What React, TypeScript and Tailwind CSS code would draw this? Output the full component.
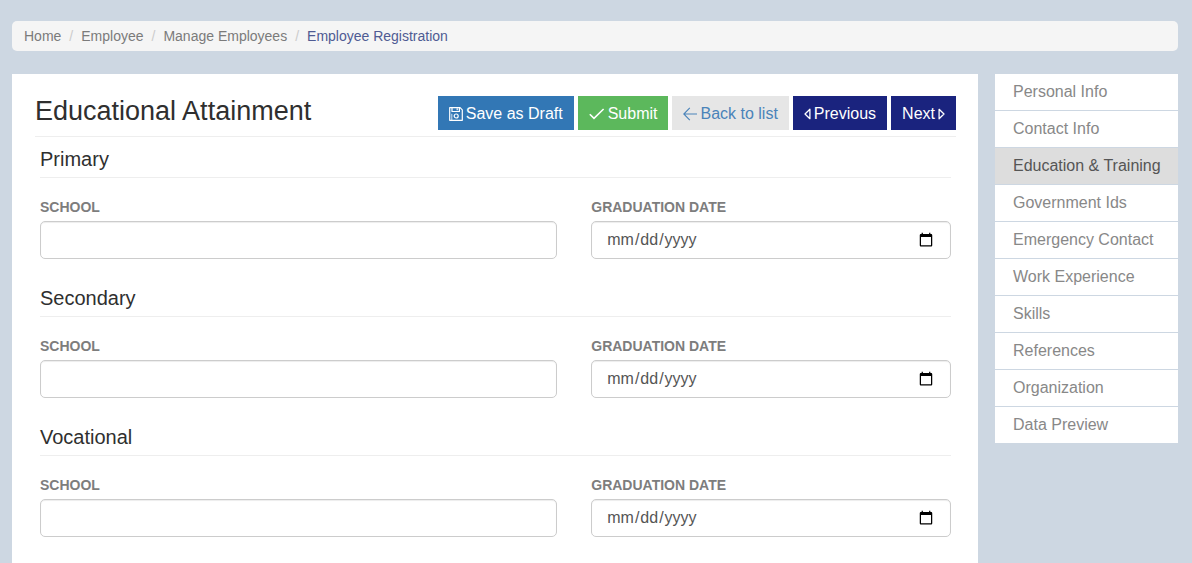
const crumbs = ["Home", "Employee", "Manage Employees", "Employee Registration"];

const steps = [
  "Personal Info",
  "Contact Info",
  "Education & Training",
  "Government Ids",
  "Emergency Contact",
  "Work Experience",
  "Skills",
  "References",
  "Organization",
  "Data Preview",
];

const activeStep = "Education & Training";

function SaveIcon() {
  return (
    <svg viewBox="0 0 14 14" className="size-[14px]" fill="none" stroke="currentColor" strokeWidth="1.2" strokeLinejoin="round" aria-hidden="true">
      <path d="M.7.7h10.4l2.2 2.2v10.4H.7z" />
      <path d="M3 .7v3.8h7.4V.7M8.2 1.2v2" />
      <path d="M2.8 13V6.8" strokeWidth=".8" />
      <circle cx="7.2" cy="9" r="2" />
    </svg>
  );
}

function CheckIcon() {
  return (
    <svg viewBox="0 0 16 14" className="h-[14px] w-4" fill="none" stroke="currentColor" strokeWidth="1.6" aria-hidden="true">
      <path d="M.8 7.2l4.2 4.2L14.6 2" />
    </svg>
  );
}

function ArrowLeftIcon() {
  return (
    <svg viewBox="0 0 14 14" className="size-[14px]" fill="none" stroke="currentColor" strokeWidth="1.1" aria-hidden="true">
      <path d="M14 7H.8M6.8.8L.8 7l6 6.2" />
    </svg>
  );
}

function Triangle({ flip = false }: { flip?: boolean }) {
  return (
    <svg
      viewBox="0 0 7 12"
      className={flip ? "h-3 w-[7px] rotate-180" : "h-3 w-[7px]"}
      fill="none"
      stroke="currentColor"
      strokeWidth="1.3"
      strokeLinejoin="round"
      aria-hidden="true"
    >
      <path d="M5.9 1.3v9.4L1 6z" />
    </svg>
  );
}

function Breadcrumb() {
  return (
    <nav aria-label="Breadcrumb" className="rounded-[5px] bg-[#f5f5f5] px-3 py-[5px]">
      <ol className="flex text-sm leading-5">
        {crumbs.map((crumb, i) => (
          <li key={crumb} className="flex">
            {i > 0 && <span className="px-2 text-[#cccccc]">/</span>}
            <a href="#" className={i === crumbs.length - 1 ? "text-[#4f5b93]" : "text-[#7b7b7b]"}>
              {crumb}
            </a>
          </li>
        ))}
      </ol>
    </nav>
  );
}

function EducationSection({ title }: { title: string }) {
  const id = title.toLowerCase();
  return (
    <section>
      <h2 className="border-b border-[#eeeeee] pb-1 text-xl leading-7 text-[#2f2f2f]">{title}</h2>
      <div className="mt-5 grid grid-cols-12 gap-x-[34px]">
        <div className="col-span-7">
          <label htmlFor={`${id}-school`} className="mb-[5px] block text-sm leading-[18px] font-bold text-[#7d7d7d]">
            SCHOOL
          </label>
          <input
            id={`${id}-school`}
            type="text"
            className="block h-[38px] w-full rounded-[5px] border border-[#cccccc] bg-white px-[14px] text-base text-[#555555] shadow-[inset_0_1px_1px_rgba(0,0,0,0.075)]"
          />
        </div>
        <div className="col-span-5">
          <label htmlFor={`${id}-date`} className="mb-[5px] block text-sm leading-[18px] font-bold text-[#7d7d7d]">
            GRADUATION DATE
          </label>
          <input
            id={`${id}-date`}
            type="date"
            className="block h-[38px] w-full rounded-[5px] border border-[#cccccc] bg-white px-[14px] text-base text-[#555555] shadow-[inset_0_1px_1px_rgba(0,0,0,0.075)]"
          />
        </div>
      </div>
    </section>
  );
}

export default function App() {
  return (
    <div className="flex min-h-screen flex-col bg-[#cdd7e2] pt-[21px] pr-[14px] pl-3 font-['Liberation_Sans',Arial,sans-serif]">
      <Breadcrumb />
      <div className="mt-[23px] flex flex-1 items-stretch gap-[17px]">
        <main className="min-w-0 flex-1 bg-white pt-[22px] pr-[22px] pb-6 pl-[23px]">
          <header className="flex items-start justify-between border-b border-[#eeeeee] pb-[6px]">
            <h1 className="text-[27px] leading-[30px] text-[#2f2f2f]">Educational Attainment</h1>
            <div className="flex gap-1 text-base">
              <button type="button" className="flex h-[34px] items-center gap-[3px] bg-[#3277b5] px-[11px] pt-px text-white">
                <SaveIcon />
                Save as Draft
              </button>
              <button type="button" className="flex h-[34px] items-center gap-[3px] bg-[#5cb85c] px-[11px] pt-px text-white">
                <CheckIcon />
                Submit
              </button>
              <button type="button" className="flex h-[34px] items-center gap-[3px] bg-[#e6e6e6] px-[11px] pt-px text-[#4a83b9]">
                <ArrowLeftIcon />
                Back to list
              </button>
              <button type="button" className="flex h-[34px] items-center gap-[3px] bg-[#1a237e] px-[11px] pt-px text-white">
                <Triangle />
                Previous
              </button>
              <button type="button" className="flex h-[34px] items-center gap-[3px] bg-[#1a237e] px-[11px] pt-px text-white">
                Next
                <Triangle flip />
              </button>
            </div>
          </header>
          <form className="mt-2 flex flex-col gap-[25px] px-[5px]">
            <EducationSection title="Primary" />
            <EducationSection title="Secondary" />
            <EducationSection title="Vocational" />
          </form>
        </main>
        <nav aria-label="Registration steps" className="w-[183px] shrink-0">
          <ul className="flex flex-col gap-px">
            {steps.map((step) => (
              <li key={step}>
                <a
                  href="#"
                  aria-current={step === activeStep ? "step" : undefined}
                  className={
                    step === activeStep
                      ? "block bg-[#dddddd] py-[6px] pr-3 pl-[18px] text-base leading-6 text-[#555555]"
                      : "block bg-white py-[6px] pr-3 pl-[18px] text-base leading-6 text-[#888888]"
                  }
                >
                  {step}
                </a>
              </li>
            ))}
          </ul>
        </nav>
      </div>
    </div>
  );
}
